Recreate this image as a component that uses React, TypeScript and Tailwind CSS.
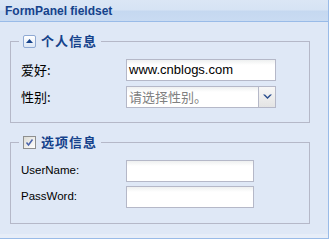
import React from "react";

const LATIN = "font-['Liberation_Sans','Noto_Sans_CJK_SC',sans-serif]";
const CJK = "font-['Noto_Sans_CJK_SC',sans-serif]";

// ─── Small controls ──────────────────────────────────────────────────────────

function ToggleButton() {
    return (
        <span className="inline-flex items-center justify-center w-[13px] h-[13px] rounded-[2px] border border-[#8fa9d3] bg-[linear-gradient(#ffffff,#dde7f5)] mr-[5px]">
            <svg width="7" height="4" viewBox="0 0 7 4">
                <path d="M0 4 L3.5 0 L7 4 Z" fill="#15428b" />
            </svg>
        </span>
    );
}

function CheckBox() {
    return (
        <span className="inline-flex items-center justify-center w-[13px] h-[13px] border border-[#8e8f8f] bg-[linear-gradient(135deg,#dcdcd6,#ffffff)] mr-[5px]">
            <svg width="9" height="9" viewBox="0 0 9 9">
                <path d="M1.5 4.5 L3.5 7 L7.5 1.5" stroke="#4a64ac" strokeWidth="1.5" fill="none" />
            </svg>
        </span>
    );
}

function TextField({ value, width, placeholder }: { value?: string; width: number; placeholder?: string }) {
    return (
        <div
            className="h-[22px] border border-[#b5b8c8] bg-[linear-gradient(#eef0f0,#ffffff_5px)] flex items-center pl-[2px]"
            style={{ width }}
        >
            {value && <span className={`${LATIN} text-[13px] text-black`}>{value}</span>}
            {placeholder && <span className={`${CJK} text-[13px] text-[#808080]`}>{placeholder}</span>}
        </div>
    );
}

function ComboField() {
    return (
        <div className="w-[150px] h-[22px] border border-[#b5b8c8] flex">
            <div className="flex-1 bg-[linear-gradient(#eef0f0,#ffffff_5px)] flex items-center pl-[2px]">
                <span className={`${CJK} text-[13px] text-[#808080]`}>请选择性别。</span>
            </div>
            <div className="w-[17px] border-l border-[#b5b8c8] bg-[linear-gradient(#f7f7f7,#e4e4e4)] flex items-center justify-center">
                <svg width="9" height="6" viewBox="0 0 9 6">
                    <path d="M0 0.5 L4.5 5 L9 0.5 L7 0.5 L4.5 3 L2 0.5 Z" fill="#2b4f8f" />
                </svg>
            </div>
        </div>
    );
}

function Row({ label, cjk, children }: { label: string; cjk?: boolean; children: React.ReactNode }) {
    return (
        <div className="flex items-center h-[22px]">
            <span className={`w-[105px] text-black ${cjk ? `${CJK} text-[13px]` : `${LATIN} text-[11.5px]`}`}>{label}</span>
            {children}
        </div>
    );
}

// ─── Panel ───────────────────────────────────────────────────────────────────

export default function App() {
    return (
        <div className="w-[330px] h-[240px] bg-white">
            <div className="w-[329px] h-[239px] border-r border-b border-[#99bbe8] bg-[#dfe8f6] flex flex-col">
                <div className="h-[22px] border-b border-[#99bbe8] bg-[linear-gradient(#dbe6f5_0%,#d6e3f4_48%,#c5d8f0_52%,#c9dbf2_100%)] flex items-center pl-[5px]">
                    <span className={`${LATIN} text-[12px] font-bold text-[#15428b]`}>FormPanel fieldset</span>
                </div>

                <div className="flex-1 px-[10px] pt-[12px]">
                    <fieldset className="w-[300px] border border-[#b5b8c8] pl-[8px] pr-[8px] pt-[11px] pb-[14px]">
                        <legend className="px-[4px] h-[14px] flex items-center">
                            <ToggleButton />
                            <span className={`${CJK} text-[13px] leading-[14px] font-bold text-[#15428b] tracking-[1px]`}>个人信息</span>
                        </legend>
                        <div className="flex flex-col gap-[5px] pl-[2px]">
                            <Row label="爱好:" cjk>
                                <TextField value="www.cnblogs.com" width={150} />
                            </Row>
                            <Row label="性别:" cjk>
                                <ComboField />
                            </Row>
                        </div>
                    </fieldset>

                    <fieldset className="w-[300px] mt-[12px] border border-[#b5b8c8] pl-[8px] pr-[8px] pt-[11px] pb-[15px]">
                        <legend className="px-[4px] h-[14px] flex items-center">
                            <CheckBox />
                            <span className={`${CJK} text-[13px] leading-[14px] font-bold text-[#15428b] tracking-[1px]`}>选项信息</span>
                        </legend>
                        <div className="flex flex-col gap-[4px] pl-[2px]">
                            <Row label="UserName:">
                                <TextField width={128} />
                            </Row>
                            <Row label="PassWord:">
                                <TextField width={128} />
                            </Row>
                        </div>
                    </fieldset>
                </div>
                <div className="h-[4px] bg-[#e6edf8]" />
            </div>
        </div>
    );
}
